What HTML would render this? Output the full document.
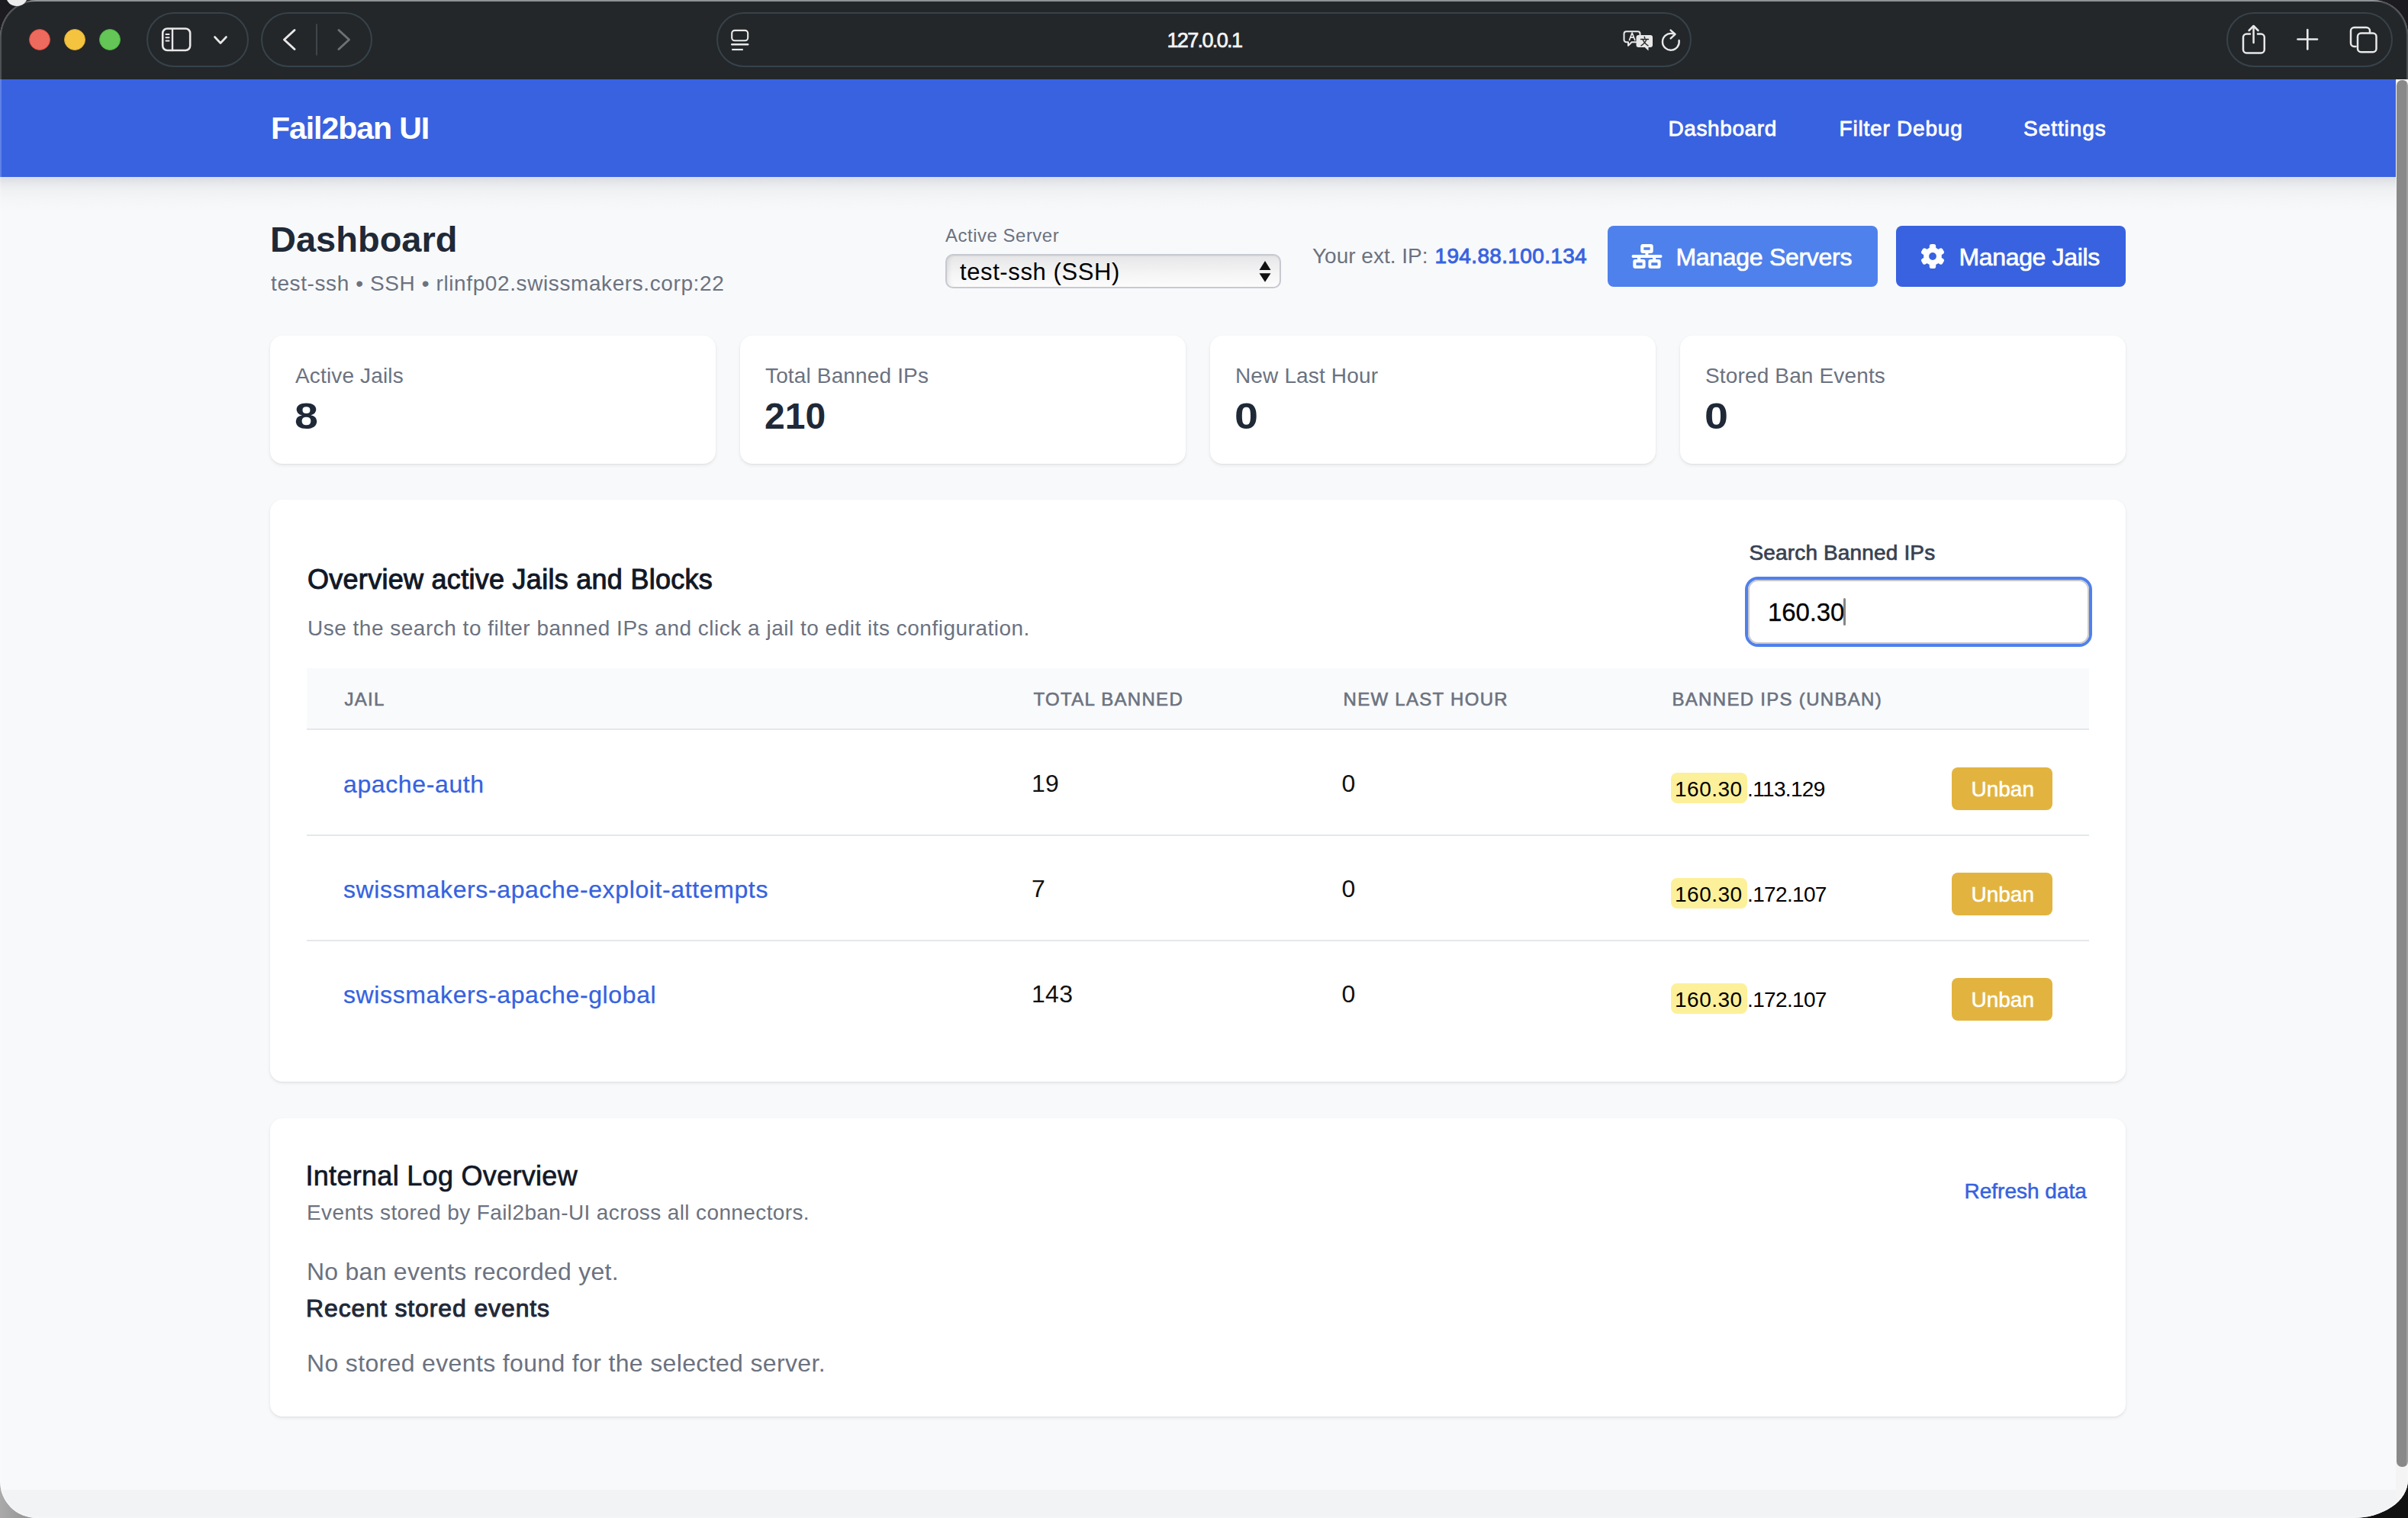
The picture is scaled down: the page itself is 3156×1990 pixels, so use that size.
<!DOCTYPE html>
<html><head><meta charset="utf-8">
<style>
*{box-sizing:border-box;margin:0;padding:0}
html,body{width:3156px;height:1990px;overflow:hidden;background:#1c1b20;font-family:"Liberation Sans",sans-serif}
.win{position:absolute;left:0;top:0;width:3156px;height:1990px;border-radius:48px 46px 72px 48px / 48px 46px 50px 48px;overflow:hidden;background:#f8f9fb}
.edge{position:absolute;left:0;top:0;width:3156px;height:1990px;border-radius:48px 46px 72px 48px / 48px 46px 50px 48px;border:2px solid rgba(255,255,255,.2);pointer-events:none}
.a{position:absolute;white-space:nowrap}
.tb{position:absolute;left:0;top:0;width:3156px;height:104px;background:#23272a;border-top:2px solid #75797c}
.pill{position:absolute;top:16px;height:72px;border:2px solid #37434a;border-radius:36px}
.tl{position:absolute;top:38px;width:28px;height:28px;border-radius:50%}
.hdr{position:absolute;left:0;top:104px;width:3140px;height:128px;background:#3962e0}
.shadow{position:absolute;left:0;top:232px;width:3140px;height:46px;background:linear-gradient(#dbdcdf 0px,#e7e8eb 8px,#eef0f2 16px,#f4f5f7 27px,#f8f9fb 46px)}
.card{position:absolute;background:#fff;border-radius:16px;box-shadow:0 2px 5px rgba(0,0,0,.07),0 1px 2px rgba(0,0,0,.05)}
svg{position:absolute;overflow:visible}
</style></head><body>
<div class="a" style="left:0;top:1930px;width:60px;height:60px;background:linear-gradient(90deg,#aaa,#888)"></div>
<div class="a" style="left:3070px;top:1930px;width:86px;height:60px;background:#111"></div>
<div class="win">
<div class="tb"></div>
<div class="tl" style="left:38px;background:#ee6a5f;border:1px solid #e0453d"></div>
<div class="tl" style="left:84px;background:#f4c441;border:1px solid #dca72a"></div>
<div class="tl" style="left:130px;background:#63c656;border:1px solid #4eb03f"></div>
<div class="pill" style="left:192px;width:134px"></div>
<div class="pill" style="left:342px;width:146px"></div>
<div class="pill" style="left:939px;width:1278px"></div>
<div class="pill" style="left:2918px;width:218px"></div>
<svg style="left:0;top:0" width="3156" height="104" viewBox="0 0 3156 104" fill="none" stroke="#e8e8e8" stroke-linecap="round" stroke-linejoin="round">
 <rect x="213.2" y="37.5" width="36" height="28.5" rx="6" stroke-width="2.6"/>
 <line x1="226" y1="38" x2="226" y2="66" stroke-width="2.4"/>
 <line x1="217.5" y1="45" x2="221.5" y2="45" stroke-width="2"/>
 <line x1="217.5" y1="49.3" x2="221.5" y2="49.3" stroke-width="2"/>
 <line x1="217.5" y1="53.6" x2="221.5" y2="53.6" stroke-width="2"/>
 <polyline points="281.5,48.5 289,56.5 296.5,48.5" stroke-width="2.6"/>
 <polyline points="386,39.5 372.5,52 386,64.5" stroke-width="3"/>
 <line x1="415" y1="32" x2="415" y2="72" stroke="#4a5054" stroke-width="1.5"/>
 <polyline points="444,39.5 457.5,52 444,64.5" stroke="#6d7174" stroke-width="3"/>
 <rect x="959.2" y="39.9" width="21" height="13.4" rx="3.8" stroke-width="2.1"/>
 <line x1="959.2" y1="58.3" x2="980.2" y2="58.3" stroke-width="2.4"/>
 <line x1="959.2" y1="65" x2="973.8" y2="65" stroke-width="2.2" stroke-linecap="butt"/>
 <path d="M2131.5 41.2 h15 a3 3 0 0 1 3 3 v8 a3 3 0 0 1 -3 3 h-8 l-4.5 4.5 v-4.5 h-2.5 a3 3 0 0 1 -3 -3 v-8 a3 3 0 0 1 3 -3z" stroke-width="2"/>
 <path d="M2135.5 52.5 l3.6 -9.5 l3.6 9.5 M2136.8 49.2 h4.6" stroke-width="1.7"/>
 <path d="M2147.5 46 h15.5 a3 3 0 0 1 3 3 v10 a3 3 0 0 1 -3 3 h-2.5 v4.6 l-4.8 -4.6 h-8.2 a3 3 0 0 1 -3 -3 v-10 a3 3 0 0 1 3 -3z" fill="#e8e8e8" stroke="none"/>
 <path d="M2155.2 48.3 l0.6 1.8 M2150.5 51.5 h10 M2153 51.8 q2.5 5.5 7 8 M2158 51.8 q-2.5 5.5 -7 8" stroke="#23272a" stroke-width="1.4"/>
 <path d="M2200.6 53 A10.9 10.9 0 1 1 2190.5 43.9 L2194.5 44.6" stroke-width="2.4"/>
 <polyline points="2189.6,39.6 2195.6,44.8 2189.6,50.4" stroke-width="2.4"/>
 <path d="M2949 44.5 h-4.5 a4.5 4.5 0 0 0 -4.5 4.5 v16 a4.5 4.5 0 0 0 4.5 4.5 h18.8 a4.5 4.5 0 0 0 4.5 -4.5 v-16 a4.5 4.5 0 0 0 -4.5 -4.5 h-4.3" stroke-width="2.5"/>
 <line x1="2953.6" y1="34.5" x2="2953.6" y2="56" stroke-width="2.5"/>
 <polyline points="2947.6,40 2953.6,34 2959.6,40" stroke-width="2.5"/>
 <line x1="3011.5" y1="51.5" x2="3037" y2="51.5" stroke-width="2.6"/>
 <line x1="3024.3" y1="39" x2="3024.3" y2="64.5" stroke-width="2.6"/>
 <path d="M3087.5 61 h-2 a4.5 4.5 0 0 1 -4.5 -4.5 v-16 a4.5 4.5 0 0 1 4.5 -4.5 h16 a4.5 4.5 0 0 1 4.5 4.5 v2" stroke-width="2.5"/>
 <rect x="3090" y="43.5" width="24.5" height="24.8" rx="4.5" stroke-width="2.5"/>
</svg>
<div class="a" style="left:1529.5px;top:39.6px;font-size:27px;line-height:27px;font-weight:400;color:#f4f4f4;letter-spacing:-1.65px;-webkit-text-stroke:0.7px #f4f4f4;">127.0.0.1</div>
<div class="hdr"></div>
<div class="shadow"></div>
<div class="a" style="left:355px;top:147.8px;font-size:41px;line-height:41px;font-weight:700;color:#fff;letter-spacing:-1.05px;">Fail2ban UI</div>
<div class="a" style="left:2186.5px;top:154.8px;font-size:28px;line-height:28px;font-weight:400;color:#fff;letter-spacing:0.6px;-webkit-text-stroke:0.8px #fff;">Dashboard</div>
<div class="a" style="left:2410.5px;top:154.8px;font-size:28px;line-height:28px;font-weight:400;color:#fff;letter-spacing:0.8px;-webkit-text-stroke:0.8px #fff;">Filter Debug</div>
<div class="a" style="left:2652px;top:154.8px;font-size:28px;line-height:28px;font-weight:400;color:#fff;letter-spacing:0.95px;-webkit-text-stroke:0.8px #fff;">Settings</div>
<div class="a" style="left:3140px;top:104px;width:16px;height:1886px;background:#f4f4f4"></div>
<div class="a" style="left:3141px;top:105px;width:15px;height:1818px;background:#898989;border-radius:7px 7px 7px 7px"></div>
<div class="a" style="left:354px;top:290.2px;font-size:47px;line-height:47px;font-weight:700;color:#1f2937;letter-spacing:0px;">Dashboard</div>
<div class="a" style="left:355px;top:358.3px;font-size:28px;line-height:28px;font-weight:400;color:#6b7280;letter-spacing:0.6px;">test-ssh • SSH • rlinfp02.swissmakers.corp:22</div>
<div class="a" style="left:1239px;top:296.7px;font-size:24px;line-height:24px;font-weight:400;color:#6b7280;letter-spacing:0.5px;">Active Server</div>
<div class="a" style="left:1239px;top:333px;width:440px;height:45px;border-radius:10px;border:2px solid #c6c9d0;box-shadow:inset 7px 0 6px -5px rgba(0,0,0,.09),inset 0 1px 2px rgba(0,0,0,.05);background:linear-gradient(#e6e6e8,#f4f4f5 55%,#fcfcfc)"></div>
<div class="a" style="left:1258px;top:340.8px;font-size:31px;line-height:31px;font-weight:400;color:#000;letter-spacing:0.6px;">test-ssh (SSH)</div>
<svg style="left:1650px;top:342px" width="16" height="28"><path d="M8 0 L15.5 12 H0.5Z M8 27.7 L15.5 16.3 H0.5Z" fill="#111"/></svg>
<div class="a" style="left:1720px;top:322.3px;font-size:28px;line-height:28px;font-weight:400;color:#6b7280;letter-spacing:0px;">Your ext. IP:</div>
<div class="a" style="left:1880.5px;top:322.3px;font-size:28px;line-height:28px;font-weight:400;color:#3763e0;letter-spacing:0.35px;-webkit-text-stroke:0.9px #3763e0;">194.88.100.134</div>
<div class="a" style="left:2107px;top:296px;width:354px;height:80px;border-radius:8px;background:#4f81ec"></div>
<svg style="left:0;top:0" width="3156" height="400" fill="#fff">
 <path fill-rule="evenodd" d="M2153.2 320h10.5a3 3 0 0 1 3 3v6a3 3 0 0 1 -3 3h-10.5a3 3 0 0 1 -3 -3v-6a3 3 0 0 1 3 -3z M2154.3 324.2v3.6h8.3v-3.6z"/>
 <rect x="2156.4" y="331" width="4" height="4"/>
 <rect x="2138.5" y="334" width="40" height="4" rx="2"/>
 <rect x="2146" y="337" width="4.2" height="4"/><rect x="2166" y="337" width="4.2" height="4"/>
 <path fill-rule="evenodd" d="M2143.3 340h10.3a3 3 0 0 1 3 3v6a3 3 0 0 1 -3 3h-10.3a3 3 0 0 1 -3 -3v-6a3 3 0 0 1 3 -3z M2144.4 344.2v3.7h8.2v-3.7z"/>
 <path fill-rule="evenodd" d="M2163.4 340h10.2a3 3 0 0 1 3 3v6a3 3 0 0 1 -3 3h-10.2a3 3 0 0 1 -3 -3v-6a3 3 0 0 1 3 -3z M2164.3 344.2v3.7h8.2v-3.7z"/>
</svg>
<div class="a" style="left:2196.5px;top:321.4px;font-size:32px;line-height:32px;font-weight:400;color:#fff;letter-spacing:-0.3px;-webkit-text-stroke:0.7px #fff;">Manage Servers</div>
<div class="a" style="left:2485px;top:296px;width:301px;height:80px;border-radius:8px;background:#3962e0"></div>
<svg style="left:2533px;top:336px" width="1" height="1" fill="#fff">
 <g><rect x="-4.2" y="-16" width="8.4" height="32" rx="2.8"/><rect x="-4.2" y="-16" width="8.4" height="32" rx="2.8" transform="rotate(60)"/><rect x="-4.2" y="-16" width="8.4" height="32" rx="2.8" transform="rotate(120)"/>
 <circle r="11.8"/><circle r="4.9" fill="#3962e0"/></g>
</svg>
<div class="a" style="left:2567.5px;top:320.9px;font-size:32px;line-height:32px;font-weight:400;color:#fff;letter-spacing:-0.35px;-webkit-text-stroke:0.7px #fff;">Manage Jails</div>
<div class="card" style="left:354px;top:440px;width:584px;height:168px"></div>
<div class="a" style="left:387px;top:478.8px;font-size:28px;line-height:28px;font-weight:400;color:#6b7280;letter-spacing:0.15px;">Active Jails</div>
<div class="a" style="left:386px;top:522.4px;font-size:48px;line-height:48px;font-weight:700;color:#1f2937;letter-spacing:0px;transform:scaleX(1.16);transform-origin:0 0;">8</div>
<div class="card" style="left:970px;top:440px;width:584px;height:168px"></div>
<div class="a" style="left:1003px;top:478.8px;font-size:28px;line-height:28px;font-weight:400;color:#6b7280;letter-spacing:0.15px;">Total Banned IPs</div>
<div class="a" style="left:1002px;top:522.4px;font-size:48px;line-height:48px;font-weight:700;color:#1f2937;letter-spacing:0px;">210</div>
<div class="card" style="left:1586px;top:440px;width:584px;height:168px"></div>
<div class="a" style="left:1619px;top:478.8px;font-size:28px;line-height:28px;font-weight:400;color:#6b7280;letter-spacing:0.15px;">New Last Hour</div>
<div class="a" style="left:1618px;top:522.4px;font-size:48px;line-height:48px;font-weight:700;color:#1f2937;letter-spacing:0px;transform:scaleX(1.16);transform-origin:0 0;">0</div>
<div class="card" style="left:2202px;top:440px;width:584px;height:168px"></div>
<div class="a" style="left:2235px;top:478.8px;font-size:28px;line-height:28px;font-weight:400;color:#6b7280;letter-spacing:0.15px;">Stored Ban Events</div>
<div class="a" style="left:2234px;top:522.4px;font-size:48px;line-height:48px;font-weight:700;color:#1f2937;letter-spacing:0px;transform:scaleX(1.16);transform-origin:0 0;">0</div>
<div class="card" style="left:354px;top:655px;width:2432px;height:763px"></div>
<div class="a" style="left:403px;top:741.5px;font-size:36px;line-height:36px;font-weight:400;color:#111827;letter-spacing:0.28px;-webkit-text-stroke:1.0px #111827;">Overview active Jails and Blocks</div>
<div class="a" style="left:403px;top:810.3px;font-size:28px;line-height:28px;font-weight:400;color:#6b7280;letter-spacing:0.5px;">Use the search to filter banned IPs and click a jail to edit its configuration.</div>
<div class="a" style="left:2292.5px;top:710.8px;font-size:28px;line-height:28px;font-weight:400;color:#374151;letter-spacing:0.15px;-webkit-text-stroke:0.7px #374151;">Search Banned IPs</div>
<div class="a" style="left:2287px;top:756px;width:455px;height:92px;border-radius:17px;border:4px solid #4f80ec;background:#fff"><div style="position:absolute;left:0;top:0;right:0;bottom:0;border:2px solid #c9c9cc;border-radius:13px"></div></div>
<div class="a" style="left:2317px;top:786.4px;font-size:33px;line-height:33px;font-weight:400;color:#000;letter-spacing:-0.1px;-webkit-text-stroke:0.3px #000;">160.30</div>
<div class="a" style="left:2415.5px;top:784px;width:3.5px;height:36px;background:#858585;border-radius:2px"></div>
<div class="a" style="left:402px;top:876px;width:2336px;height:81px;background:#f9fafb;border-bottom:2px solid #e5e7eb"></div>
<div class="a" style="left:402px;top:1094px;width:2336px;height:2px;background:#e5e7eb"></div>
<div class="a" style="left:402px;top:1232px;width:2336px;height:2px;background:#e5e7eb"></div>
<div class="a" style="left:451.5px;top:904.7px;font-size:24px;line-height:24px;font-weight:400;color:#6b7280;letter-spacing:1.3px;-webkit-text-stroke:0.6px #6b7280;">JAIL</div>
<div class="a" style="left:1354.5px;top:904.7px;font-size:24px;line-height:24px;font-weight:400;color:#6b7280;letter-spacing:1.3px;-webkit-text-stroke:0.6px #6b7280;">TOTAL BANNED</div>
<div class="a" style="left:1760.5px;top:904.7px;font-size:24px;line-height:24px;font-weight:400;color:#6b7280;letter-spacing:1.3px;-webkit-text-stroke:0.6px #6b7280;">NEW LAST HOUR</div>
<div class="a" style="left:2191.5px;top:904.7px;font-size:24px;line-height:24px;font-weight:400;color:#6b7280;letter-spacing:1.3px;-webkit-text-stroke:0.6px #6b7280;">BANNED IPS (UNBAN)</div>
<div class="a" style="left:450px;top:1011.9px;font-size:32px;line-height:32px;font-weight:400;color:#3562e0;letter-spacing:0.62px;-webkit-text-stroke:0.25px #3562e0;">apache-auth</div>
<div class="a" style="left:1352px;top:1011.4px;font-size:32px;line-height:32px;font-weight:400;color:#111;letter-spacing:0.3px;">19</div>
<div class="a" style="left:1758.5px;top:1011.4px;font-size:32px;line-height:32px;font-weight:400;color:#111;letter-spacing:0px;">0</div>
<div class="a" style="left:2190px;top:1013px;width:100px;height:40px;border-radius:8px;background:#fdf09a"></div>
<div class="a" style="left:2195px;top:1020.8px;font-size:28px;line-height:28px;font-weight:400;color:#000;letter-spacing:0.5px;">160.30</div>
<div class="a" style="left:2290px;top:1020.8px;font-size:28px;line-height:28px;font-weight:400;color:#000;letter-spacing:-0.65px;">.113.129</div>
<div class="a" style="left:2558px;top:1006px;width:132px;height:56px;border-radius:8px;background:#e2b43f"></div>
<div class="a" style="left:2583.5px;top:1020.8px;font-size:28px;line-height:28px;font-weight:400;color:#fff;letter-spacing:0px;-webkit-text-stroke:0.5px #fff;">Unban</div>
<div class="a" style="left:450px;top:1149.9px;font-size:32px;line-height:32px;font-weight:400;color:#3562e0;letter-spacing:0.62px;-webkit-text-stroke:0.25px #3562e0;">swissmakers-apache-exploit-attempts</div>
<div class="a" style="left:1352px;top:1149.4px;font-size:32px;line-height:32px;font-weight:400;color:#111;letter-spacing:0.3px;">7</div>
<div class="a" style="left:1758.5px;top:1149.4px;font-size:32px;line-height:32px;font-weight:400;color:#111;letter-spacing:0px;">0</div>
<div class="a" style="left:2190px;top:1151px;width:100px;height:40px;border-radius:8px;background:#fdf09a"></div>
<div class="a" style="left:2195px;top:1158.8px;font-size:28px;line-height:28px;font-weight:400;color:#000;letter-spacing:0.5px;">160.30</div>
<div class="a" style="left:2290px;top:1158.8px;font-size:28px;line-height:28px;font-weight:400;color:#000;letter-spacing:-0.65px;">.172.107</div>
<div class="a" style="left:2558px;top:1144px;width:132px;height:56px;border-radius:8px;background:#e2b43f"></div>
<div class="a" style="left:2583.5px;top:1158.8px;font-size:28px;line-height:28px;font-weight:400;color:#fff;letter-spacing:0px;-webkit-text-stroke:0.5px #fff;">Unban</div>
<div class="a" style="left:450px;top:1287.9px;font-size:32px;line-height:32px;font-weight:400;color:#3562e0;letter-spacing:0.62px;-webkit-text-stroke:0.25px #3562e0;">swissmakers-apache-global</div>
<div class="a" style="left:1352px;top:1287.4px;font-size:32px;line-height:32px;font-weight:400;color:#111;letter-spacing:0.3px;">143</div>
<div class="a" style="left:1758.5px;top:1287.4px;font-size:32px;line-height:32px;font-weight:400;color:#111;letter-spacing:0px;">0</div>
<div class="a" style="left:2190px;top:1289px;width:100px;height:40px;border-radius:8px;background:#fdf09a"></div>
<div class="a" style="left:2195px;top:1296.8px;font-size:28px;line-height:28px;font-weight:400;color:#000;letter-spacing:0.5px;">160.30</div>
<div class="a" style="left:2290px;top:1296.8px;font-size:28px;line-height:28px;font-weight:400;color:#000;letter-spacing:-0.65px;">.172.107</div>
<div class="a" style="left:2558px;top:1282px;width:132px;height:56px;border-radius:8px;background:#e2b43f"></div>
<div class="a" style="left:2583.5px;top:1296.8px;font-size:28px;line-height:28px;font-weight:400;color:#fff;letter-spacing:0px;-webkit-text-stroke:0.5px #fff;">Unban</div>
<div class="card" style="left:354px;top:1466px;width:2432px;height:391px"></div>
<div class="a" style="left:400.5px;top:1524.0px;font-size:36px;line-height:36px;font-weight:400;color:#111827;letter-spacing:0.3px;-webkit-text-stroke:0.7px #111827;">Internal Log Overview</div>
<div class="a" style="left:402px;top:1576.3px;font-size:28px;line-height:28px;font-weight:400;color:#6b7280;letter-spacing:0.38px;">Events stored by Fail2ban-UI across all connectors.</div>
<div class="a" style="left:2574.5px;top:1548.3px;font-size:28px;line-height:28px;font-weight:400;color:#3562e0;letter-spacing:0px;-webkit-text-stroke:0.5px #3562e0;">Refresh data</div>
<div class="a" style="left:402px;top:1650.9px;font-size:32px;line-height:32px;font-weight:400;color:#6b7280;letter-spacing:0.25px;">No ban events recorded yet.</div>
<div class="a" style="left:401px;top:1698.9px;font-size:32px;line-height:32px;font-weight:400;color:#1f2937;letter-spacing:0.88px;-webkit-text-stroke:1.0px #1f2937;">Recent stored events</div>
<div class="a" style="left:402px;top:1770.9px;font-size:32px;line-height:32px;font-weight:400;color:#6b7280;letter-spacing:0.35px;">No stored events found for the selected server.</div>
<div class="a" style="left:0;top:1953px;width:3140px;height:37px;background:#f2f3f5"></div>
<div class="edge"></div>
</div>
<div class="a" style="left:8px;top:-18px;width:28px;height:26px;border-radius:50%;background:#ececec"></div>
</body></html>
